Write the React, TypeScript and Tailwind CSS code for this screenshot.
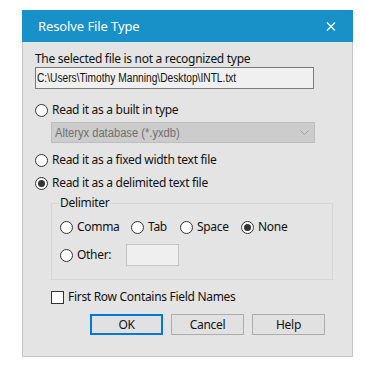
import React from "react";

const UI = { fontFamily: '"Segoe UI", "Noto Sans", sans-serif' };
const MS = { fontFamily: '"Liberation Sans", Arial, sans-serif' };

function Radio({ checked = false }: { checked?: boolean }) {
  return (
    <span className="flex h-[13px] w-[13px] shrink-0 items-center justify-center rounded-full border border-[#333333] bg-white">
      {checked && <span className="h-[7px] w-[7px] rounded-full bg-[#333333]" />}
    </span>
  );
}

function RadioRow({ label, checked, className = "" }: { label: string; checked?: boolean; className?: string }) {
  return (
    <div className={`flex h-[20px] items-center gap-[4px] ${className}`}>
      <Radio checked={checked} />
      <span>{label}</span>
    </div>
  );
}

export default function App() {
  return (
    <div
      className="h-[369px] w-[366px] bg-white pl-[22px] pt-[10px] text-[12px] leading-[16px] tracking-[-0.3px] text-[#111111]"
      style={UI}
    >
      <div className="w-[331px]">
        <div className="flex h-[32px] items-center justify-between bg-[#1890c8] pl-[16px] pr-[17px] text-[13px] tracking-[-0.1px] text-white">
          <span>Resolve File Type</span>
          <svg width="10" height="9" viewBox="0 0 10 9" stroke="white" strokeWidth="1.1">
            <path d="M1 0.5 L9 8.5 M9 0.5 L1 8.5" />
          </svg>
        </div>
        <div className="flex h-[315px] flex-col border-x border-b border-[#c6c6c6] bg-[#e4e4e4] pl-[12px] pt-[9px]">
          <div>The selected file is not a recognized type</div>
          <div
            className="flex h-[22px] w-[279px] items-center overflow-hidden whitespace-nowrap border border-[#7a7a7a] bg-[#f0f0f0] pl-[1px] tracking-normal"
            style={MS}
          >
            <span className="origin-left scale-x-[0.85]">C:\Users\Timothy Manning\Desktop\INTL.txt</span>
          </div>

          <RadioRow label="Read it as a built in type" className="mt-[11px]" />
          <div
            className="ml-[16px] mt-[2px] flex h-[21px] w-[264px] items-center justify-between border border-[#bdbdbd] bg-[#cccccc] pl-[3px] pr-[5px] tracking-normal text-[#6f6f6f]"
            style={MS}
          >
            <span className="origin-left scale-x-[0.93]">Alteryx database (*.yxdb)</span>
            <svg width="9" height="5" viewBox="0 0 9 5" fill="none" stroke="#a3a3a3" strokeWidth="1">
              <path d="M0.5 0.5 L4.5 4.5 L8.5 0.5" />
            </svg>
          </div>

          <RadioRow label="Read it as a fixed width text file" className="mt-[7px]" />
          <RadioRow label="Read it as a delimited text file" checked className="mt-[3px]" />

          <div className="relative ml-[16px] mt-[10px] h-[77px] w-[282px] border border-[#d6d6d6] pl-[8px] pt-[13px]">
            <span className="absolute left-[7px] top-[-9px] bg-[#e4e4e4] px-[1px]">Delimiter</span>
            <div className="flex">
              <RadioRow label="Comma" className="w-[71px]" />
              <RadioRow label="Tab" className="w-[49px]" />
              <RadioRow label="Space" className="w-[61px]" />
              <RadioRow label="None" checked />
            </div>
            <div className="mt-[7px] flex h-[22px] items-center">
              <RadioRow label="Other:" className="w-[66px]" />
              <div className="h-[22px] w-[53px] border border-[#c4c4c4] bg-[#efefef]" />
            </div>
          </div>

          <div className="ml-[16px] mt-[7px] flex h-[20px] items-center gap-[4px]">
            <span className="h-[13px] w-[13px] border border-[#333333] bg-white" />
            <span>First Row Contains Field Names</span>
          </div>

          <div className="ml-[55px] mt-[7px] flex gap-[8px]">
            <button className="flex h-[21px] w-[73px] items-center justify-center border-2 border-[#0078d7] bg-[#e1e1e1]">OK</button>
            <button className="flex h-[21px] w-[73px] items-center justify-center border border-[#adadad] bg-[#e1e1e1]">Cancel</button>
            <button className="flex h-[21px] w-[73px] items-center justify-center border border-[#adadad] bg-[#e1e1e1]">Help</button>
          </div>
        </div>
      </div>
    </div>
  );
}
